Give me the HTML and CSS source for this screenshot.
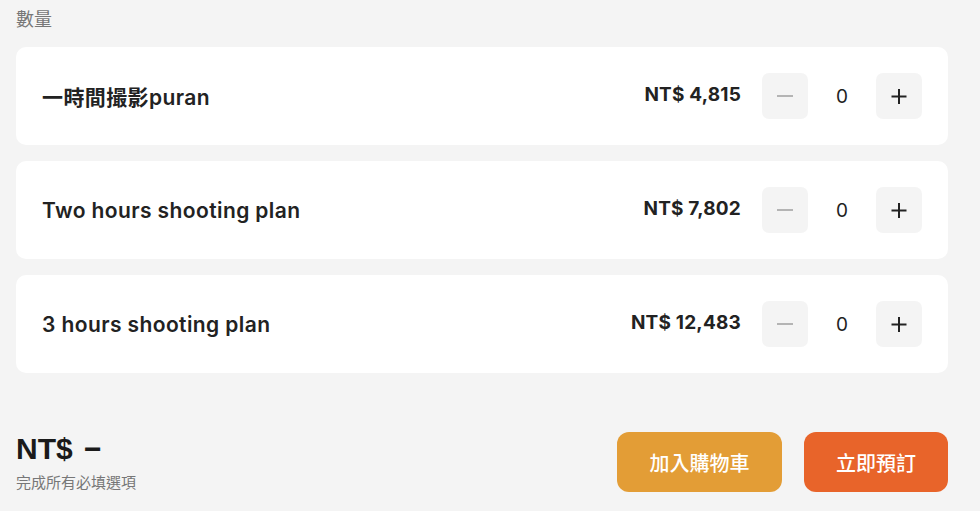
FILE: index.html
```html
<!DOCTYPE html>
<html lang="zh-Hant">
<head>
    <meta charset="UTF-8">
    <meta name="viewport" content="width=device-width, initial-scale=1.0">
    <title>數量</title>
    <link rel="stylesheet" href="styles.css">
</head>
<body>
    <div class="section-label">數量</div>

    <div class="plan-list">
        <div class="plan-card">
            <div class="plan-name">一時間撮影puran</div>
            <div class="plan-price">NT$ 4,815</div>
            <div class="stepper">
                <button class="step-btn minus" type="button" aria-label="減少">
                    <svg width="16" height="16" viewBox="0 0 16 16"><path d="M0 8h16" /></svg>
                </button>
                <span class="step-count">0</span>
                <button class="step-btn plus" type="button" aria-label="增加">
                    <svg width="16" height="16" viewBox="0 0 16 16"><path d="M0.5 8.5h15M8 1v15" /></svg>
                </button>
            </div>
        </div>
        <div class="plan-card">
            <div class="plan-name">Two hours shooting plan</div>
            <div class="plan-price">NT$ 7,802</div>
            <div class="stepper">
                <button class="step-btn minus" type="button" aria-label="減少">
                    <svg width="16" height="16" viewBox="0 0 16 16"><path d="M0 8h16" /></svg>
                </button>
                <span class="step-count">0</span>
                <button class="step-btn plus" type="button" aria-label="增加">
                    <svg width="16" height="16" viewBox="0 0 16 16"><path d="M0.5 8.5h15M8 1v15" /></svg>
                </button>
            </div>
        </div>
        <div class="plan-card">
            <div class="plan-name">3 hours shooting plan</div>
            <div class="plan-price">NT$ 12,483</div>
            <div class="stepper">
                <button class="step-btn minus" type="button" aria-label="減少">
                    <svg width="16" height="16" viewBox="0 0 16 16"><path d="M0 8h16" /></svg>
                </button>
                <span class="step-count">0</span>
                <button class="step-btn plus" type="button" aria-label="增加">
                    <svg width="16" height="16" viewBox="0 0 16 16"><path d="M0.5 8.5h15M8 1v15" /></svg>
                </button>
            </div>
        </div>
    </div>

    <div class="checkout-bar">
        <div class="total">
            <div class="total-price">NT$ &minus;</div>
            <div class="total-hint">完成所有必填選項</div>
        </div>
        <div class="actions">
            <button class="action-btn cart" type="button">加入購物車</button>
            <button class="action-btn book" type="button">立即預訂</button>
        </div>
    </div>
</body>
</html>
```

FILE: styles.css
```css
body {
    margin: 0;
    padding: 8px 32px 0 16px;
    background-color: #f4f4f4;
    color: #222;
    font-family: "Inter", "Noto Sans CJK TC", sans-serif;
}

.section-label {
    font-size: 18px;
    line-height: 24px;
    color: #777;
    margin-bottom: 15px;
}

.plan-list {
    display: flex;
    flex-direction: column;
    gap: 16px;
}

.plan-card {
    display: flex;
    align-items: center;
    height: 98px;
    padding: 0 26px;
    background-color: #fff;
    border-radius: 10px;
}

.plan-name {
    flex: 1;
    font-size: 21px;
    font-weight: 600;
    letter-spacing: 0.4px;
    color: #222;
}

.plan-price {
    font-size: 19px;
    font-weight: 700;
    letter-spacing: 0.2px;
    margin-right: 21px;
    margin-bottom: 4px;
}

.stepper {
    display: flex;
    align-items: center;
}

.step-btn {
    display: flex;
    align-items: center;
    justify-content: center;
    width: 46px;
    height: 46px;
    border: none;
    border-radius: 7px;
    background-color: #f4f4f4;
    padding: 0;
    cursor: pointer;
}

.step-btn svg {
    fill: none;
    stroke-width: 2;
}

.step-btn.minus svg {
    stroke: #b4b4b4;
}

.step-btn.plus svg {
    stroke: #222;
}

.step-count {
    width: 68px;
    text-align: center;
    font-size: 19px;
}

.checkout-bar {
    display: flex;
    justify-content: space-between;
    align-items: center;
    margin-top: 59px;
}

.total-price {
    font-family: "Liberation Sans", "Noto Sans CJK TC", sans-serif;
    font-size: 30px;
    font-weight: 700;
    word-spacing: 3px;
    color: #1a1a1a;
}

.total-hint {
    margin-top: 5px;
    font-size: 15px;
    color: #777;
}

.actions {
    display: flex;
    gap: 22px;
}

.action-btn {
    height: 60px;
    border: none;
    border-radius: 12px;
    color: #fff;
    font-family: "Noto Sans CJK TC", sans-serif;
    font-size: 20px;
    font-weight: 500;
    cursor: pointer;
}

.action-btn.cart {
    width: 165px;
    background-color: #e39d36;
}

.action-btn.book {
    width: 144px;
    background-color: #e8642a;
}
```
